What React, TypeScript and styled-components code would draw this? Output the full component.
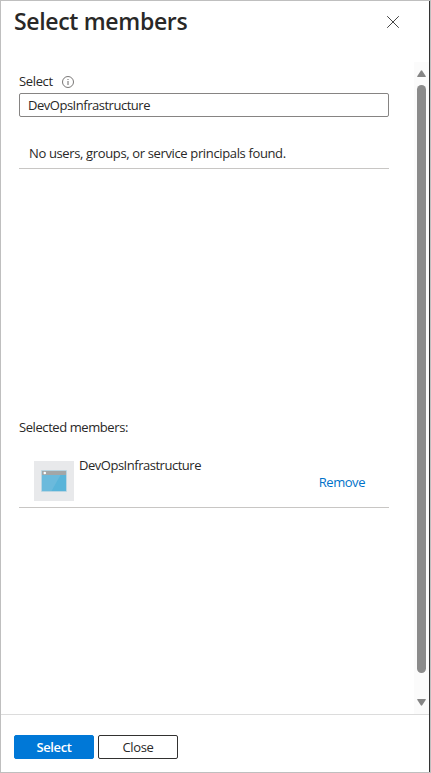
import React from 'react';
import styled, { createGlobalStyle } from 'styled-components';

const GlobalStyle = createGlobalStyle`
  * { box-sizing: border-box; }
  body { margin: 0; background: #fff; }
  button, input { font: inherit; letter-spacing: inherit; }
`;

const Panel = styled.section`
  display: flex;
  flex-direction: column;
  width: 431px;
  height: 773px;
  border: 1px solid #bfbfbf;
  background: #fff;
  box-shadow: inset -1px 0 0 #333;
  color: #292827;
  font: 13px/18px 'Open Sans', 'Noto Sans', sans-serif;
  letter-spacing: -0.36px;
`;

const Header = styled.header`
  display: flex;
  justify-content: space-between;
  height: 61px;
  padding: 4px 31px 0 13px;
`;

const Title = styled.h1`
  margin: 0;
  font-size: 23px;
  line-height: 32px;
  font-weight: 600;
  letter-spacing: -0.33px;
`;

const IconButton = styled.button`
  display: flex;
  align-self: flex-start;
  margin-top: 11px;
  padding: 0;
  border: 0;
  background: none;
`;

const Body = styled.div`
  display: flex;
  height: 652px;
  padding-right: 1px;
`;

const Content = styled.main`
  width: 370px;
  margin: 9px 25px 0 18px;
`;

const Label = styled.label`
  display: flex;
  align-items: center;
  gap: 9px;
  height: 20px;

  svg {
    margin-top: 2px;
  }
`;

const SearchInput = styled.input`
  display: block;
  width: 370px;
  height: 24px;
  margin-top: 2px;
  padding: 0 8px;
  border: 1px solid #868483;
  border-radius: 2px;
  outline: 0;
  color: inherit;
  letter-spacing: -0.48px;
`;

const EmptyMessage = styled.p`
  height: 52px;
  margin: 0;
  padding: 27px 10px 0;
  border-bottom: 1px solid #c8c6c4;
`;

const SelectedHeading = styled.h2`
  margin: 249px 0 0;
  font-size: 13px;
  line-height: 18px;
  font-weight: 400;
  letter-spacing: -0.42px;
`;

const MemberRow = styled.div`
  display: flex;
  height: 72px;
  padding: 25px 24px 0 15px;
  border-bottom: 1px solid #c8c6c4;
`;

const Avatar = styled.div`
  display: flex;
  width: 40px;
  height: 40px;
  background: #e8e9eb;
`;

const MemberName = styled.span`
  flex: 1;
  margin: -5px 0 0 5px;
  letter-spacing: -0.48px;
`;

const RemoveLink = styled.button`
  height: 18px;
  margin-top: 12px;
  padding: 0;
  border: 0;
  background: none;
  color: #0072c9;
  letter-spacing: -0.45px;
`;

const Scrollbar = styled.div`
  display: flex;
  flex-direction: column;
  align-items: center;
  width: 15px;
  padding-top: 8px;
  background: #fbfbfb;
`;

const Thumb = styled.div`
  width: 9px;
  height: 588px;
  margin: 8px 0 26px;
  border-radius: 5px;
  background: #8b8b8b;
`;

const Footer = styled.footer`
  display: flex;
  gap: 4px;
  flex: 1;
  margin-right: 1px;
  padding: 20px 13px 0;
  border-top: 1px solid #dcdcdc;
`;

const ActionButton = styled.button<{ $primary?: boolean }>`
  width: 80px;
  height: 24px;
  padding: 0 0 1px;
  border: 1px solid ${p => (p.$primary ? '#0078d7' : '#323130')};
  border-radius: 2px;
  background: ${p => (p.$primary ? '#0078d7' : '#fff')};
  color: ${p => (p.$primary ? '#fff' : '#292827')};
  font-weight: ${p => (p.$primary ? 600 : 400)};
  line-height: 20px;
`;

const CloseIcon = () => (
  <svg width="12" height="12" viewBox="0 0 12 12" fill="none" stroke="#444" strokeWidth="1">
    <path d="M.2.2l11.6 11.6M11.8.2L.2 11.8" />
  </svg>
);

const InfoIcon = () => (
  <svg width="12" height="12" viewBox="0 0 12 12" fill="none" stroke="#6b6968">
    <circle cx="6" cy="6" r="5.5" strokeWidth=".9" />
    <path d="M6 5v4M6 3v1" strokeWidth="1" />
  </svg>
);

const AppWindowIcon = () => (
  <svg width="40" height="40" viewBox="0 0 40 40">
    <rect x="7" y="9" width="26" height="22" rx="1" fill="#b9d5e2" />
    <path d="M8 14h24v16H8z" fill="#59b4d9" />
    <path d="M8 14h18.5L17.5 30H8z" fill="#6bbadc" />
    <path d="M8 10h24v4H8z" fill="#a3a6a7" />
    <circle cx="10.8" cy="12" r="1.3" fill="#fff" />
  </svg>
);

const Arrow = ({ down }: { down?: boolean }) => (
  <svg width="9" height="7" viewBox="0 0 9 7" fill="#858585">
    <path d={down ? 'M.7 0h7.6q.9 0 .5.8L5.2 6.3q-.7.9-1.4 0L.2.8Q-.2 0 .7 0z' : 'M.7 7h7.6q.9 0 .5-.8L5.2.7q-.7-.9-1.4 0L.2 6.2q-.4.8.5.8z'} />
  </svg>
);

export default function App() {
  return (
    <>
      <GlobalStyle />
      <Panel>
        <Header>
          <Title>Select members</Title>
          <IconButton aria-label="Close panel"><CloseIcon /></IconButton>
        </Header>
        <Body>
          <Content>
            <Label htmlFor="member-search">Select <InfoIcon /></Label>
            <SearchInput id="member-search" defaultValue="DevOpsInfrastructure" spellCheck={false} />
            <EmptyMessage>No users, groups, or service principals found.</EmptyMessage>
            <SelectedHeading>Selected members:</SelectedHeading>
            <MemberRow>
              <Avatar><AppWindowIcon /></Avatar>
              <MemberName>DevOpsInfrastructure</MemberName>
              <RemoveLink>Remove</RemoveLink>
            </MemberRow>
          </Content>
          <Scrollbar>
            <Arrow />
            <Thumb />
            <Arrow down />
          </Scrollbar>
        </Body>
        <Footer>
          <ActionButton $primary>Select</ActionButton>
          <ActionButton>Close</ActionButton>
        </Footer>
      </Panel>
    </>
  );
}
